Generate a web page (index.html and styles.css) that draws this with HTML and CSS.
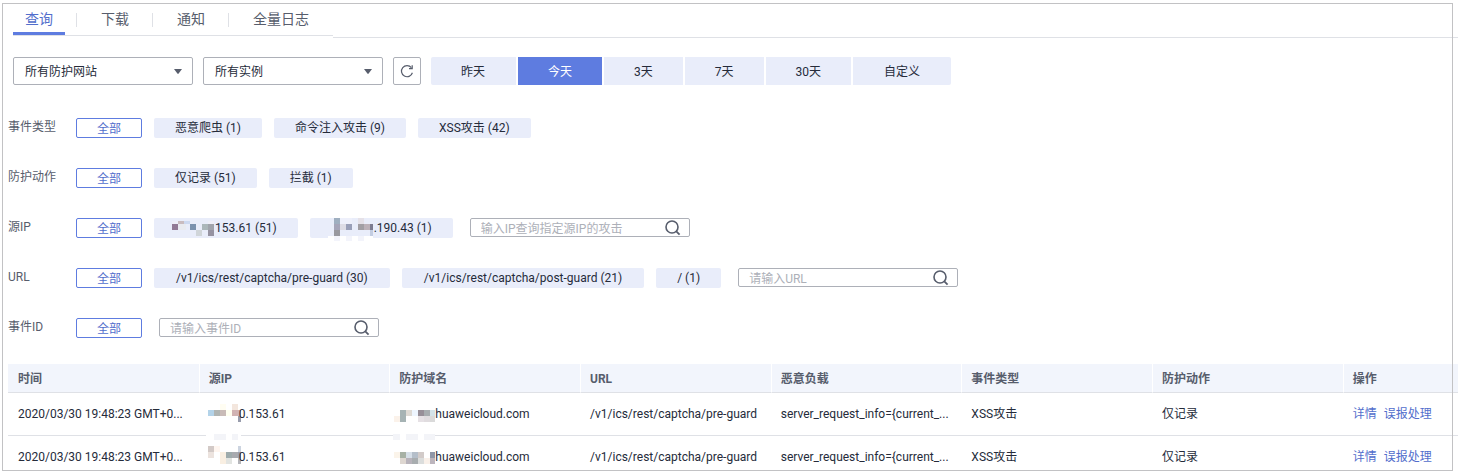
FILE: index.html
```html
<!DOCTYPE html>
<html lang="zh-CN">
<head>
<meta charset="utf-8">
<title>防护事件</title>
<link rel="stylesheet" href="styles.css">
</head>
<body>
<svg width="0" height="0" class="sprite" aria-hidden="true">
  <symbol id="search" viewBox="0 0 16 16"><circle cx="7" cy="7" r="6" fill="none" stroke="#575d6c" stroke-width="1.6"/><path d="M11.3 11.3 14.6 14.6" stroke="#575d6c" stroke-width="1.8" fill="none"/></symbol>
  <symbol id="arrow" viewBox="0 0 8 5"><path d="M0 0H8L4.6 4.6Q4 5.2 3.4 4.6Z" fill="#575d6c"/></symbol>
</svg>
<main class="page">
  <nav class="tabs">
    <div class="tabs-list">
      <a class="tab active" href="#query">查询</a>
      <a class="tab" href="#download">下载</a>
      <a class="tab" href="#notice">通知</a>
      <a class="tab" href="#logs">全量日志</a>
    </div>
    <div class="tabs-rest"></div>
  </nav>

  <div class="toolbar">
    <div class="select">
      <select aria-label="防护网站"><option>所有防护网站</option></select>
      <svg width="8" height="5"><use href="#arrow"/></svg>
    </div>
    <div class="select">
      <select aria-label="实例"><option>所有实例</option></select>
      <svg width="8" height="5"><use href="#arrow"/></svg>
    </div>
    <button class="refresh" type="button" aria-label="刷新">
      <svg width="14" height="14" viewBox="0 0 14 14" fill="none" stroke="#575d6c" stroke-width="1.2"><path d="M11.4 3.6A5.6 5.6 0 1 0 12.4 8.8"/><path d="M12.2 1.2V4.6H9"/></svg>
    </button>
    <div class="segments">
      <button type="button">昨天</button>
      <button type="button" class="on">今天</button>
      <button type="button">3天</button>
      <button type="button">7天</button>
      <button type="button">30天</button>
      <button type="button">自定义</button>
    </div>
  </div>

  <div class="filters">
    <div class="filter">
      <span class="name">事件类型</span>
      <button type="button" class="chip all">全部</button>
      <button type="button" class="chip">恶意爬虫 (1)</button>
      <button type="button" class="chip">命令注入攻击 (9)</button>
      <button type="button" class="chip">XSS攻击 (42)</button>
    </div>
    <div class="filter">
      <span class="name">防护动作</span>
      <button type="button" class="chip all">全部</button>
      <button type="button" class="chip">仅记录 (51)</button>
      <button type="button" class="chip">拦截 (1)</button>
    </div>
    <div class="filter">
      <label class="name" for="ip">源IP</label>
      <button type="button" class="chip all">全部</button>
      <button type="button" class="chip"><svg class="mask" width="40" height="20" viewBox="175 218 40 20"><path fill="#927a95" d="M172 224h6v6h-6z"/><path fill="#c9bcbf" d="M178 221h6v3h-6z"/><path fill="#cdd9f0" d="M184 221h6v3h-6z"/><path fill="#e9ebf0" d="M178 224h8v6h-8z"/><path fill="#7b92ae" d="M190 224h6v6h-6z"/><path fill="#abb7ba" d="M202 224h6v6h-6z"/><path fill="#a0a4ac" d="M208 224h6v6h-6z"/><path fill="#d0d5d9" d="M196 230h6v6h-6z"/><path fill="#9592a1" d="M208 230h6v6h-6z"/><path fill="#eeeff8" d="M172 221h6v3h-6zM208 221h6v3h-6z"/></svg>153.61 (51)</button>
      <button type="button" class="chip"><svg class="mask" width="43" height="20" viewBox="331 218 43 20"><path fill="#9fafc0" d="M334 218h6v6h-6z"/><path fill="#eef0fb" d="M340 218h12v6h-12z"/><path fill="#a5a5b9" d="M334 224h6v6h-6z"/><path fill="#dddce5" d="M340 224h6v6h-6z"/><path fill="#999fb8" d="M346 224h6v6h-6z"/><path fill="#e5e1e8" d="M358 218h6v6h-6z"/><path fill="#a29fa4" d="M358 224h6v6h-6z"/><path fill="#bcb1b8" d="M364 224h6v6h-6z"/><path fill="#7c7b90" d="M370 224h3v6h-3z"/><path fill="#99999f" d="M334 230h6v6h-6z"/><path fill="#c3cde2" d="M370 230h3v6h-3z"/><path fill="#fff" d="M328 236h45v5h-45z"/><path fill="#f3f4fb" d="M334 236h6v5h-6zM346 236h6v5h-6zM358 236h6v5h-6z"/></svg>.190.43 (1)</button>
      <div class="search"><input id="ip" type="text" placeholder="输入IP查询指定源IP的攻击"><button type="button" aria-label="搜索"><svg width="16" height="16"><use href="#search"/></svg></button></div>
    </div>
    <div class="filter">
      <label class="name" for="url">URL</label>
      <button type="button" class="chip all">全部</button>
      <button type="button" class="chip path">/v1/ics/rest/captcha/pre-guard (30)</button>
      <button type="button" class="chip path">/v1/ics/rest/captcha/post-guard (21)</button>
      <button type="button" class="chip">/ (1)</button>
      <div class="search"><input id="url" type="text" placeholder="请输入URL"><button type="button" aria-label="搜索"><svg width="16" height="16"><use href="#search"/></svg></button></div>
    </div>
    <div class="filter">
      <label class="name" for="event">事件ID</label>
      <button type="button" class="chip all">全部</button>
      <div class="search"><input id="event" type="text" placeholder="请输入事件ID"><button type="button" aria-label="搜索"><svg width="16" height="16"><use href="#search"/></svg></button></div>
    </div>
  </div>

  <table class="events">
    <colgroup><col class="c"><col class="c"><col class="c"><col class="c"><col class="c"><col class="c"><col class="c"><col></colgroup>
    <thead>
      <tr><th>时间</th><th>源IP</th><th>防护域名</th><th>URL</th><th>恶意负载</th><th>事件类型</th><th>防护动作</th><th>操作</th></tr>
    </thead>
    <tbody>
      <tr>
        <td>2020/03/30 19:48:23 GMT+0...</td>
        <td><div class="masked"><svg class="mask" width="30" height="16" viewBox="209 406 30 16"><path fill="#b3d3e9" d="M208 410h6v6h-6z"/><path fill="#b0b5b3" d="M214 410h6v6h-6z"/><path fill="#c9bbb7" d="M220 410h6v6h-6z"/><path fill="#fffff0" d="M226 410h6v6h-6z"/><path fill="#d1b3b3" d="M232 410h9v6h-9z"/><path fill="#fffdf2" d="M220 404h6v6h-6z"/><path fill="#f3e6dd" d="M232 404h6v6h-6z"/><path fill="#989cac" d="M238 416h3v6h-3z"/><path fill="#fff" d="M206 432h35v8h-35z"/><path fill="#f3f4f8" d="M214 434h12v6h-12zM232 434h6v6h-6z"/></svg>0.153.61</div></td>
        <td><div class="masked"><svg class="mask" width="36" height="16" viewBox="399 406 36 16"><path fill="#fbf2ea" d="M394 416h6v6h-6z"/><path fill="#a6b3b4" d="M400 410h6v12h-6z"/><path fill="#dedad4" d="M406 410h6v6h-6z"/><path fill="#eef6ff" d="M412 410h6v6h-6z"/><path fill="#978f98" d="M418 410h6v6h-6z"/><path fill="#a7acaf" d="M424 410h6v6h-6z"/><path fill="#d3e3e9" d="M430 410h5v6h-5z"/><path fill="#e6e1e5" d="M418 416h6v6h-6z"/><path fill="#e0dcdf" d="M424 416h6v6h-6z"/><path fill="#dadada" d="M430 416h5v6h-5z"/><path fill="#fff" d="M393 432h42v8h-42z"/><path fill="#f3f4f8" d="M393 434h7v6h-7zM406 434h12v6h-12zM424 434h11v6h-11z"/></svg>huaweicloud.com</div></td>
        <td>/v1/ics/rest/captcha/pre-guard</td>
        <td>server_request_info={current_...</td>
        <td>XSS攻击</td>
        <td>仅记录</td>
        <td><a href="#detail">详情</a><a href="#false-alarm">误报处理</a></td>
      </tr>
      <tr>
        <td>2020/03/30 19:48:23 GMT+0...</td>
        <td><div class="masked"><svg class="mask" width="30" height="16" viewBox="209 449 30 16"><path fill="#d3cac7" d="M208 446h6v6h-6z"/><path fill="#fff6f0" d="M214 446h6v6h-6z"/><path fill="#ece3de" d="M208 452h6v6h-6z"/><path fill="#f9efe2" d="M220 452h6v12h-6z"/><path fill="#9eabac" d="M226 452h6v6h-6z"/><path fill="#a8aaaf" d="M232 452h6v6h-6z"/><path fill="#e2e4e1" d="M226 458h6v6h-6z"/><path fill="#ccd4e0" d="M238 446h3v6h-3z"/><path fill="#9d9fac" d="M238 452h3v6h-3z"/><path fill="#b5b6bb" d="M238 458h3v6h-3z"/></svg>0.153.61</div></td>
        <td><div class="masked"><svg class="mask" width="36" height="16" viewBox="399 449 36 16"><path fill="#fbf4ea" d="M394 452h6v6h-6z"/><path fill="#a7b1a5" d="M400 452h6v6h-6z"/><path fill="#d6dfe8" d="M406 452h6v6h-6z"/><path fill="#b4bec9" d="M412 452h6v6h-6z"/><path fill="#d2cbc9" d="M418 452h6v6h-6z"/><path fill="#8f97a8" d="M430 452h5v6h-5z"/><path fill="#ded7d1" d="M400 458h6v6h-6z"/><path fill="#b8b3bb" d="M406 458h6v6h-6z"/><path fill="#a8adaf" d="M412 458h6v6h-6z"/><path fill="#dbdddc" d="M418 458h6v6h-6z"/><path fill="#f9f0e9" d="M424 458h6v6h-6z"/><path fill="#bcb5bd" d="M430 458h5v6h-5z"/></svg>huaweicloud.com</div></td>
        <td>/v1/ics/rest/captcha/pre-guard</td>
        <td>server_request_info={current_...</td>
        <td>XSS攻击</td>
        <td>仅记录</td>
        <td><a href="#detail">详情</a><a href="#false-alarm">误报处理</a></td>
      </tr>
    </tbody>
  </table>
</main>
</body>
</html>
```
FILE: styles.css
```css
* { box-sizing: border-box; }

body {
  margin: 0;
  padding-bottom: 5px;
  background: #fff;
  color: #252b3a;
  font: 12px/16px Roboto, "Noto Sans CJK SC", sans-serif;
}

button, input, select { font: inherit; color: inherit; margin: 0; }
button { border: 0; padding: 0; background: none; }
a { color: #526ecc; text-decoration: none; }

.sprite { position: absolute; }

.page { position: relative; }

/* Frame line drawn over the content */
.page::after {
  content: "";
  position: absolute;
  inset: 3px 5px 0 2px;
  border: 1px solid #c2c2c4;
  pointer-events: none;
}

.tabs { display: flex; align-items: flex-start; padding-left: 13px; }
.tabs-list {
  display: flex;
  gap: 24px;
  height: 36px;
  padding-right: 12px;
  border-bottom: 1px solid #dfe1e6;
}
.tab {
  position: relative;
  height: 35px;
  padding: 9px 12px 0;
  border-bottom: 3px solid transparent;
  color: #575d6c;
  font-size: 14px;
  line-height: 20px;
}
.tab.active { color: #526ecc; border-color: #5e7ce0; }
.tab + .tab::before {
  content: "";
  position: absolute;
  left: -13px;
  top: 13px;
  width: 1px;
  height: 14px;
  background: #dfe1e6;
}
.tabs-rest { flex: 1; height: 38px; border-bottom: 1px solid #dfe1e6; }

.toolbar { display: flex; gap: 10px; padding: 19px 13px 0; }
.select { position: relative; width: 180px; }
.select select {
  appearance: none;
  width: 100%;
  height: 28px;
  padding: 2px 30px 0 11px;
  border: 1px solid #adb0b8;
  border-radius: 2px;
  background: #fff;
}
.select svg { position: absolute; right: 11px; top: 12px; pointer-events: none; }
.refresh {
  display: flex;
  align-items: center;
  justify-content: center;
  width: 28px;
  height: 28px;
  border: 1px solid #adb0b8;
  border-radius: 2px;
}
.segments { display: flex; gap: 2px; }
.segments button { height: 28px; padding: 2px 30px 0; background: #e9edfa; }
.segments button:first-child { padding-right: 31px; border-radius: 2px 0 0 2px; }
.segments button:last-child { padding-left: 31px; padding-right: 31px; border-radius: 0 2px 2px 0; }
.segments .on { background: #5e7ce0; color: #fff; }

.filters { display: grid; gap: 30px; padding: 33px 8px 0; }
.filter { display: flex; gap: 12px; height: 20px; }
.name { width: 56px; line-height: 18px; color: #575d6c; }
.chip {
  display: flex;
  align-items: center;
  height: 20px;
  padding: 0 21px;
  border-radius: 2px;
  background: #e9edfa;
  white-space: nowrap;
}
.chip.path { padding: 0 22px; }
.chip.all { padding: 2px 20px 0; border: 1px solid #5e7ce0; background: #fff; color: #526ecc; }
.mask { flex: none; overflow: visible; }

.search {
  display: flex;
  align-items: center;
  width: 220px;
  height: 19px;
  margin-left: 5px;
  padding: 0 8px 0 10px;
  border: 1px solid #adb0b8;
  border-radius: 2px;
}
.search input { flex: 1; min-width: 0; height: 17px; padding: 2px 0 0; border: 0; outline: 0; background: none; }
.search input::placeholder { color: #adb0b8; }
.search button { display: flex; }

.events {
  width: calc(100% - 8px);
  margin: 26px 0 0 8px;
  table-layout: fixed;
  border-collapse: separate;
  border-spacing: 0;
}
.c { width: 13.15%; }
.events th, .events td {
  padding: 13px 10px;
  border-bottom: 1px solid #dfe1e6;
  text-align: left;
  white-space: nowrap;
}
.events th {
  padding: 7px 10px 5px;
  background: #f2f5fc;
  color: #575d6c;
  font-weight: 700;
}
.events th + th { border-left: 1px solid #fff; padding-left: 9px; }
.events tbody tr:last-child td { padding-bottom: 6px; border-bottom: 0; }
.events td a + a { margin-left: 7px; }
.masked { display: flex; }
```
